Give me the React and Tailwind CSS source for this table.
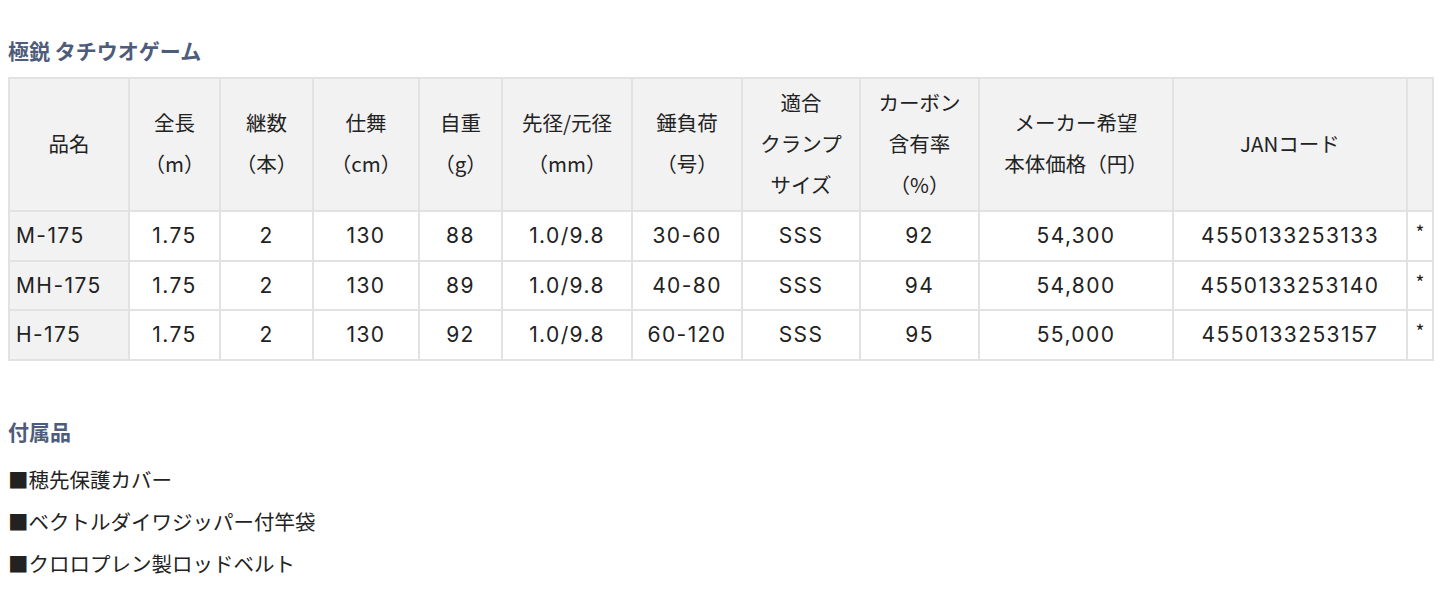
import React from "react";

const cols = [
  { w: "w-[120px]", label: ["品名"] },
  { w: "w-[91px]", label: ["全長", "（m）"] },
  { w: "w-[93px]", label: ["継数", "（本）"] },
  { w: "w-[106px]", label: ["仕舞", "（cm）"] },
  { w: "w-[83px]", label: ["自重", "（g）"] },
  { w: "w-[130px]", label: ["先径/元径", "（mm）"] },
  { w: "w-[110px]", label: ["錘負荷", "（号）"] },
  { w: "w-[118px]", label: ["適合", "クランプ", "サイズ"] },
  { w: "w-[119px]", label: ["カーボン", "含有率", "（%）"] },
  { w: "w-[194px]", label: ["メーカー希望", "本体価格（円）"] },
  { w: "w-[234px]", label: ["JANコード"] },
  { w: "w-[26px]", label: [""] },
];

const rows = [
  ["M-175", "1.75", "2", "130", "88", "1.0/9.8", "30-60", "SSS", "92", "54,300", "4550133253133"],
  ["MH-175", "1.75", "2", "130", "89", "1.0/9.8", "40-80", "SSS", "94", "54,800", "4550133253140"],
  ["H-175", "1.75", "2", "130", "92", "1.0/9.8", "60-120", "SSS", "95", "55,000", "4550133253157"],
];

const accessories = [
  "■穂先保護カバー",
  "■ベクトルダイワジッパー付竿袋",
  "■クロロプレン製ロッドベルト",
];

export default function App() {
  return (
    <div className="bg-white text-[#222] px-[8px] pt-[34px] font-['Noto_Sans_CJK_JP','Noto_Sans',sans-serif]">
      <h2 className="text-[21px] font-bold text-[#4e5c7b] leading-[32px]">
        極鋭 タチウオゲーム
      </h2>

      <table className="mt-[11px] table-fixed border-collapse w-[1424px] text-[20.5px]">
        <thead>
          <tr>
            {cols.map((c, i) => (
              <th
                key={i}
                className={`${c.w} h-[133px] bg-[#f2f2f2] border-2 border-[#e2e2e2] font-normal text-center align-middle leading-[41px] px-1 pb-[3px]`}
              >
                {c.label.map((l, j) => (
                  <div key={j}>{l}</div>
                ))}
              </th>
            ))}
          </tr>
        </thead>
        <tbody>
          {rows.map((r, i) => (
            <tr key={i} className="h-[49.7px]">
              {r.map((v, j) => (
                <td
                  key={j}
                  className={`font-['Inter',sans-serif] text-[21px] tracking-[1.4px] leading-[40px] border-2 border-[#e2e2e2] ${
                    j === 0 ? "bg-[#f2f2f2] text-left pl-[6px]" : "text-center"
                  }`}
                >
                  {v}
                </td>
              ))}
              <td className="border-2 border-[#e2e2e2] text-center align-top pt-[10px] text-[19px] leading-[19px]">
                *
              </td>
            </tr>
          ))}
        </tbody>
      </table>

      <h2 className="mt-[54px] text-[21px] font-bold text-[#4e5c7b] leading-[32px]">
        付属品
      </h2>
      <ul className="mt-[11px] text-[20.5px] leading-[42px]">
        {accessories.map((a) => (
          <li key={a}>{a}</li>
        ))}
      </ul>
    </div>
  );
}
